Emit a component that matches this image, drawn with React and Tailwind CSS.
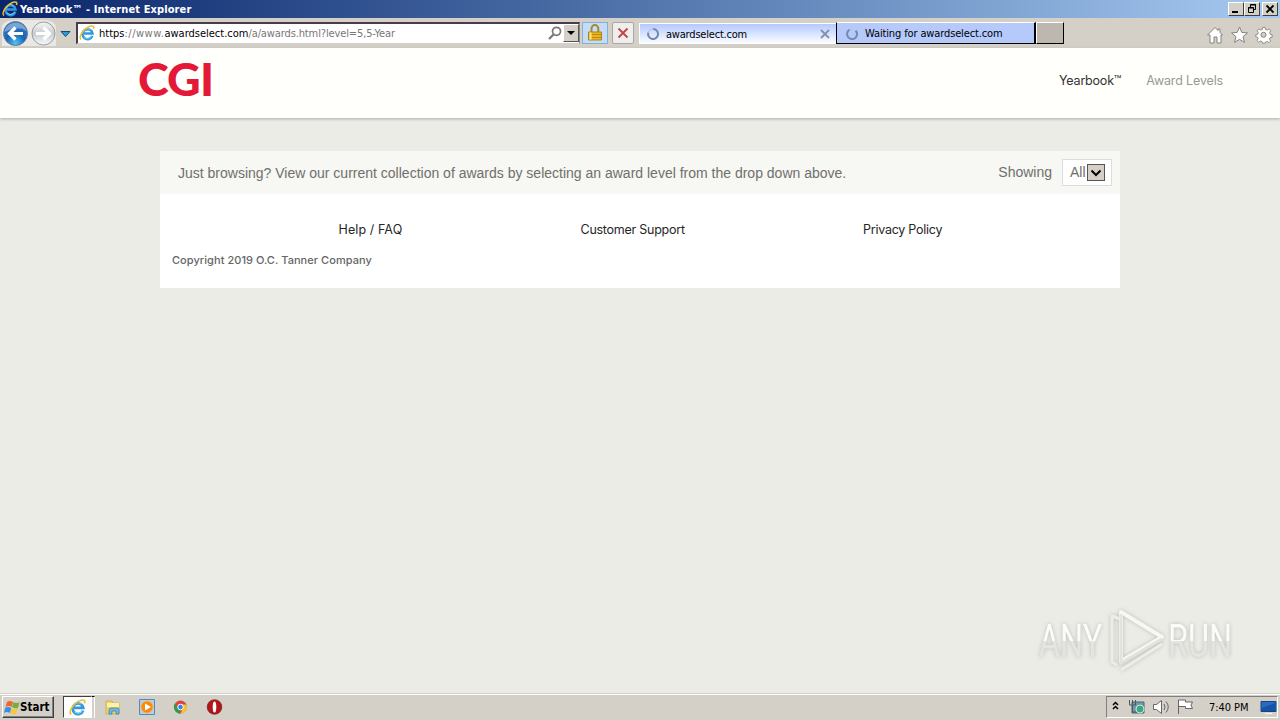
import { clsx } from 'clsx'

const uiFont = "font-['DejaVu_Sans_Condensed','DejaVu_Sans',sans-serif] [font-stretch:condensed]"

function IeLogo({ className }) {
  return (
    <svg viewBox="0 0 16 16" className={className} fill="none">
      <path d="M13.3 10.8A5 5 0 1 1 13.5 8.4H5" stroke="#3299df" strokeWidth="2.5" />
      <path d="M12.7 10.6A4.7 4.7 0 0 1 5 12" stroke="#7bd5fa" strokeWidth="1" />
      <path d="M4.7 5.5A5 5 0 0 1 11.5 4.8" stroke="#79d2f8" strokeWidth="1" />
      <path d="M2.1 14.5C-1.6 12.5 5.5 1.7 12.9 1c2.2-.2 2.3 1.6 1.5 3" stroke="#edbf2b" strokeWidth="1.5" />
    </svg>
  )
}

function Spinner({ className }) {
  return (
    <svg viewBox="0 0 14 14" className={className} fill="none">
      <path d="M7 2a5 5 0 1 1-4.7 3.5" stroke="#7588ad" strokeWidth="2" />
      <path d="M2.3 5.5A5 5 0 0 1 7 2" stroke="#bac8e5" strokeWidth="1.5" />
    </svg>
  )
}

function WindowButton({ children, className }) {
  return (
    <button
      className={clsx(
        'flex h-[14px] w-4 items-center justify-center border border-t-white border-l-white border-r-[#404040] border-b-[#404040] bg-[#d4d0c8]',
        className
      )}
    >
      <svg viewBox="0 0 14 12" className="h-3 w-[14px] shrink-0" fill="none" stroke="#000">
        {children}
      </svg>
    </button>
  )
}

function TitleBar() {
  return (
    <div className="flex h-[18px] items-center bg-linear-to-r from-[#0a246a] to-[#a6caf0] pr-[2px] pl-[2px]">
      <IeLogo className="h-4 w-4" />
      <span className={clsx(uiFont, 'ml-[2px] pt-px text-[11px] leading-[16px] font-bold tracking-[0.1px] whitespace-nowrap text-white')}>
        Yearbook™ - Internet Explorer
      </span>
      <div className="ml-auto flex">
        <WindowButton>
          <path d="M3 9h6" strokeWidth="2" />
        </WindowButton>
        <WindowButton>
          <path d="M5.5 4V1.5h5v5H9M5 2h6" />
          <path d="M3.5 4.5h5v5h-5zM3 5h6" />
        </WindowButton>
        <WindowButton className="ml-[2px]">
          <path d="M3.5 2.5l7 7M10.5 2.5l-7 7" strokeWidth="1.8" />
        </WindowButton>
      </div>
    </div>
  )
}

function NavButtons() {
  return (
    <svg viewBox="0 0 74 30" className="h-[30px] w-[74px]">
      <defs>
        <radialGradient id="back" cx=".5" cy=".9" r=".8">
          <stop stopColor="#4cc5f5" />
          <stop offset=".5" stopColor="#1864b5" />
          <stop offset="1" stopColor="#3d78bd" />
        </radialGradient>
        <linearGradient id="forward" x2="0" y2="1">
          <stop stopColor="#f7f7f7" />
          <stop offset=".5" stopColor="#c8ccd0" />
          <stop offset="1" stopColor="#f7fbff" />
        </linearGradient>
      </defs>
      <path d="M2 8Q4 2 15 2h29q11 0 12 8v18H2z" fill="#e9e8e5" />
      <circle cx="15.5" cy="15.5" r="12" fill="url(#back)" stroke="#657b98" />
      <path d="M4.5 14C7 2 24 2 26.5 13 19 8 12 11 4.5 14z" fill="#91b9e1" opacity=".7" />
      <path d="M23 15.5H10m5.5-6l-6 6 6 6" fill="none" stroke="#fff" strokeWidth="3.2" />
      <circle cx="43.5" cy="15.5" r="11.5" fill="url(#forward)" stroke="#9b9c9d" />
      <path d="M36 15.5h13m-5.5-6l6 6-6 6" fill="none" stroke="#fff" strokeWidth="3.2" />
      <path d="M61 13.5h9l-4.5 5z" fill="#2c9be0" stroke="#174978" />
    </svg>
  )
}

function AddressBar() {
  return (
    <div className="mt-[4px] flex h-[22px] w-[504px] border-t-2 border-r border-b border-l-2 border-t-[#493c4c] border-r-[#8a8580] border-b-[#d4d0c8] border-l-[#493c4c] bg-white">
      <IeLogo className="mt-px ml-px h-4 w-4" />
      <span className={clsx(uiFont, 'ml-1 text-[11px] leading-[20px] whitespace-nowrap text-[#777]')}>
        <span className="text-black">https</span>
        <span className="tracking-[0.5px]">://www.</span>
        <span className="text-black">awardselect.com</span>
        <span className="tracking-[-0.12px]">/a/awards.html?level=5,5-Year</span>
      </span>
      <svg viewBox="0 0 14 14" className="mt-[2px] mr-px ml-auto h-[14px] w-[14px]" fill="none" stroke="#777">
        <circle cx="8.5" cy="5.3" r="4" strokeWidth="1.7" />
        <path d="M5.5 8.5L1 13" strokeWidth="2.2" />
      </svg>
      <button className="h-[18px] w-4 border border-t-white border-l-white border-r-[#555] border-b-[#555] bg-[#d4d0c8]">
        <svg viewBox="0 0 14 16" className="h-4 w-[14px]">
          <path d="M3 6h8L7 10z" />
        </svg>
      </button>
    </div>
  )
}

function Toolbar() {
  return (
    <div className="flex h-[30px] bg-[#d4d0c8]">
      <NavButtons />
      <div className="w-[2px]" />
      <AddressBar />
      <button className="mt-[4px] ml-[2px] flex h-[22px] w-[26px] justify-center border border-[#85aedb] bg-[#c5dcf5]">
        <svg viewBox="0 0 16 18" className="mt-px h-[18px] w-4">
          <path d="M4.5 9V4.5a3.3 3.3 0 0 1 6.8 0V9" fill="none" stroke="#a4882f" strokeWidth="2" />
          <path d="M1.5 8h13v8h-13z" fill="#e8b71e" stroke="#af821b" />
          <path d="M2 10.5h12M2 13.5h12" stroke="#bd8b13" />
          <path d="M3.5 8.5v7" stroke="#ffe98c" strokeWidth="2" />
        </svg>
      </button>
      <button className="mt-[4px] ml-[4px] flex h-[22px] w-[22px] items-center justify-center rounded-[2px] border border-[#aaa7a3] bg-[#f0eeec]">
        <svg viewBox="0 0 12 12" className="h-3 w-3" fill="none" stroke="#be4543" strokeWidth="1.8">
          <path d="M1.5 1.5l9 9M10.5 1.5l-9 9" />
        </svg>
      </button>
      <div className="mt-[5px] ml-[5px] flex h-[21px] w-[197px] items-center border-t border-l border-white bg-linear-to-b from-[#b3c9ff] to-white pl-[6px]">
        <Spinner className="h-[14px] w-[14px]" />
        <span className={clsx(uiFont, 'ml-[6px] pt-px text-[11px] leading-[16px] tracking-[-0.2px] whitespace-nowrap')}>
          awardselect.com
        </span>
        <svg viewBox="0 0 10 10" className="mr-[6px] ml-auto h-[10px] w-[10px]" stroke="#8390aa" strokeWidth="1.8">
          <path d="M1 1l8 8M9 1L1 9" />
        </svg>
      </div>
      <div className="mt-[4px] flex h-[22px] w-[200px] items-center border-t border-r-2 border-b border-l border-t-white border-r-black border-b-black border-l-black bg-[#b5c9fb] pt-px pl-[8px]">
        <Spinner className="h-[14px] w-[14px] rotate-45" />
        <span className={clsx(uiFont, 'ml-[6px] text-[11px] leading-[18px] tracking-[-0.13px] whitespace-nowrap')}>
          Waiting for awardselect.com
        </span>
      </div>
      <div className="mt-[4px] h-[22px] w-7 border border-t-white border-l-white border-r-black border-b-black bg-[#bdb7af]" />
      <svg viewBox="0 0 68 20" className="mt-[7px] mr-[6px] ml-auto h-5 w-[68px]" fill="#fff" stroke="#85827f">
        <path d="M3 10L1.5 10 9 2.5l3 3V4h2v3.5l2.5 2.5H15v8h-4v-6H8v6H4v-8z" />
        <path d="M33.5 2l2.3 5.4 5.7.5-4.4 3.7 1.4 5.8-5-3.1-5 3.1 1.4-5.8-4.4-3.7 5.7-.5z" />
        <path d="M56.5 2h3l.5 2.3 2 .8 2-1.3 2 2-1.3 2 .8 2 2 .5v3l-2.2.4-.8 1.7 1.4 2-2 2-2-1.4-2 .8-.4 1.200h-3l-.4-1.700-1.800-.8-2 1.400-2-2 1.400-2-.8-1.800-1.900-.4v-2.400l2-.5.8-2-1.300-2 2-2 2 1.300 2-.8z" transform="matrix(.88 0 0 .88 6.7 .6)" />
        <circle cx="57.5" cy="9.8" r="2.5" fill="#d4d0c8" />
      </svg>
    </div>
  )
}

function SiteHeader() {
  return (
    <header className="z-10 flex h-[70px] justify-between bg-[#fffffc] pr-[57px] pl-[138px] font-[Inter,sans-serif] text-[12.5px] shadow-[0_1px_3px_#aaa]">
      <div className="mt-[3px] font-[Lato,sans-serif] text-[46.5px] leading-[55px] font-black tracking-[-0.8px] text-[#e31937]">
        CGI
      </div>
      <nav className="flex gap-[25px] pt-[23px] leading-5 whitespace-nowrap">
        <a className="tracking-[-0.19px] text-[#333]">Yearbook™</a>
        <a className="tracking-[-0.15px] text-[#999993]">Award Levels</a>
      </nav>
    </header>
  )
}

function AwardsPanel() {
  return (
    <main className="mx-auto mt-[33px] h-[137px] w-[960px] bg-white">
      <div className="flex h-[43px] items-center justify-between bg-[#f7f7f3] pr-2 pl-[18px] font-['Liberation_Sans',sans-serif] text-sm whitespace-nowrap text-[#70706c]">
        <p>
          Just browsing? View our current collection of awards by selecting an award level from the drop down above.
        </p>
        <div className="flex items-center gap-[10px]">
          <span className="pb-px">Showing</span>
          <div className="flex h-[27px] w-[50px] items-center border border-[#ddddda] bg-white pl-[7px]">
            <span className="pb-px">All</span>
            <div className="ml-px flex h-[17px] w-[18px] items-center justify-center border border-[#555] bg-[#d4d0c8]">
              <svg viewBox="0 0 12 8" className="h-2 w-3" fill="none" stroke="#000" strokeWidth="2">
                <path d="M1.5 1.5L6 6l4.5-4.5" />
              </svg>
            </div>
          </div>
        </div>
      </div>
      <footer className="font-[Inter,sans-serif]">
        <div className="flex pt-[26px] pl-[178.5px] text-[12.5px] leading-5 tracking-[-0.25px] whitespace-nowrap text-[#262626]">
          <a className="w-[242px] tracking-[0.1px]">Help / FAQ</a>
          <a className="w-[282.5px]">Customer Support</a>
          <a>Privacy Policy</a>
        </div>
        <p className="pt-[12px] pl-3 text-[11px] leading-4 font-medium tracking-[0.05px] whitespace-nowrap text-[#666]">
          Copyright 2019 O.C. Tanner Company
        </p>
      </footer>
    </main>
  )
}

function Watermark() {
  return (
    <div className="absolute top-[606px] left-[1034px] flex h-[68px] w-[206px] items-center font-['Roboto',sans-serif] text-[47px] leading-none text-[#fafaf8] opacity-80 drop-shadow-[0_0_2px_#b0b0ac]">
      <span className="w-[67px] shrink-0">
        <span className="inline-block origin-left scale-x-[0.69] bg-linear-to-b from-[#fff] from-50% to-[#e3e4df] to-50% bg-clip-text pl-[7px] font-normal text-transparent">
          ANY
        </span>
      </span>
      <svg viewBox="0 0 66 68" className="h-[68px] w-[66px] shrink-0" fill="none" strokeWidth="4" strokeLinejoin="round">
        <path d="M20 57V6l41 25-39 23" stroke="#fafaf8" />
        <path d="M20 8v49l41-24" stroke="#e0e1dc" strokeWidth="3" />
        <path d="M19 13l-8-3v46l5 3M20 64l41-26" stroke="#eeeeea" strokeWidth="3" />
      </svg>
      <span className="ml-px inline-block origin-left scale-x-[0.69] bg-linear-to-b from-[#fff] from-50% to-[#e3e4df] to-50% bg-clip-text font-normal text-transparent">
        RUN
      </span>
    </div>
  )
}

function TaskIcon({ children }) {
  return (
    <svg viewBox="0 0 18 18" className="h-[18px] w-[18px]">
      {children}
    </svg>
  )
}

function Taskbar() {
  return (
    <div className={clsx(uiFont, 'flex h-[27px] items-center border-t border-[#d4d0c8] bg-[#d4d0c8] pl-[2px] text-[11px] shadow-[inset_0_1px_#fff]')}>
      <button className="flex h-[22px] w-[52px] items-center border border-t-white border-l-white border-r-[#404040] border-b-[#404040] font-bold shadow-[inset_-1px_-1px_#808080]">
        <svg viewBox="0 0 17 17" className="ml-px h-[17px] w-[17px] shrink-0">
          <path d="M3 3q3-2 6 0L7.5 8Q5 6 1.5 8z" fill="#ef652d" />
          <path d="M9.5 3q3 2 6 0L14 9q-3 1-6-1z" fill="#75ae38" />
          <path d="M1.2 9q3-2 6 0L6 14q-3-2-6 0z" fill="#398fe0" />
          <path d="M8 9.5q3 2 6 0l-2 5q-3 2-5.5-.5z" fill="#f9c634" />
        </svg>
        <span className="-ml-px pt-px text-[11.5px]">Start</span>
      </button>
      <button className="ml-[9px] flex h-[22px] w-[29px] items-center justify-center border border-t-[#404040] border-l-[#404040] border-r-white border-b-white bg-[#fdfdfb]">
        <IeLogo className="h-[17px] w-[17px]" />
      </button>
      <div className="h-[22px] w-[3px] border-t border-r border-t-black border-r-white" />
      <div className="ml-[9px] flex gap-4">
        <TaskIcon>
          <path d="M2 3h6l1 2h6v11H2z" fill="#efd36b" stroke="#c6a34c" strokeWidth=".7" />
          <path d="M3 5h12v4H3z" fill="#fff1a8" />
          <path d="M5 16v-4q0-2 2-2h6q2 0 2 2v4h-3v-3H8v3z" fill="#71bade" stroke="#347ba4" strokeWidth=".7" />
        </TaskIcon>
        <TaskIcon>
          <path d="M1.5 1.5h15v15h-15z" fill="#acd2ef" stroke="#508bc3" />
          <circle cx="9" cy="9" r="6.2" fill="#f58b13" stroke="#f9c07b" />
          <path d="M7 5.5l6 3.5-6 3.5z" fill="#fff" />
        </TaskIcon>
        <TaskIcon>
          <circle cx="8.5" cy="9" r="6.5" fill="#da453a" />
          <path d="M3 5.5l4 6 1.5 4A6.5 6.5 0 0 1 3 5.5z" fill="#299d50" />
          <path d="M8.5 6.5h6A6.5 6.5 0 0 1 8.5 15.5l3-6.5z" fill="#f5c52c" />
          <circle cx="8.5" cy="9" r="2.8" fill="#397fe8" stroke="#fff" />
        </TaskIcon>
        <TaskIcon>
          <circle cx="8.5" cy="9" r="7.3" fill="#b41519" stroke="#7c1417" strokeWidth=".7" />
          <ellipse cx="8.5" cy="9" rx="1.8" ry="5.5" fill="#fff" />
        </TaskIcon>
      </div>
      <div className="mr-[2px] ml-auto flex h-[22px] w-[172px] items-center border border-t-[#808080] border-l-[#808080] border-r-white border-b-white">
        <svg viewBox="0 0 92 22" className="h-[22px] w-[92px] shrink-0" fill="none" stroke="#666">
          <path d="M6 9l2.5-2.5L11 9M6 13l2.5-2.5L11 13" stroke="#000" strokeWidth="1.5" />
          <path d="M25 6h12v11H25z" fill="#6c9ab4" stroke="#52626c" />
          <path d="M22.5 4v5h6V4M25.5 9v7h5M25.5 4v4" stroke="#555" />
          <circle cx="33" cy="13" r="4" fill="#3aa982" stroke="#c8e7df" />
          <path d="M46.5 8.5h3l5-4v13l-5-4h-3z" fill="#fff" />
          <path d="M57 8q2 3 0 6M59 5.5q4.5 5.5 0 11" />
          <path d="M71.5 18V4h7v2h7l-1.5 3 1.5 3.500h-7v-2h-7" fill="#fff" />
        </svg>
        <span className="ml-[10px] pt-[2px] tracking-[-0.06px] whitespace-nowrap">7:40 PM</span>
        <svg viewBox="0 0 17 15" className="ml-auto h-[15px] w-[17px]">
          <path d="M1 1.5h15v10H1z" fill="#286cc1" stroke="#184382" />
          <path d="M2 8L15 3v8H2z" fill="#1453a7" />
          <path d="M5 13.5h7" stroke="#f4f4f4" />
        </svg>
      </div>
    </div>
  )
}

export default function App() {
  return (
    <div className="relative flex h-[720px] w-[1280px] flex-col overflow-hidden bg-[#ebece6] text-black">
      <TitleBar />
      <Toolbar />
      <SiteHeader />
      <div className="flex-1">
        <AwardsPanel />
      </div>
      <Watermark />
      <Taskbar />
    </div>
  )
}
